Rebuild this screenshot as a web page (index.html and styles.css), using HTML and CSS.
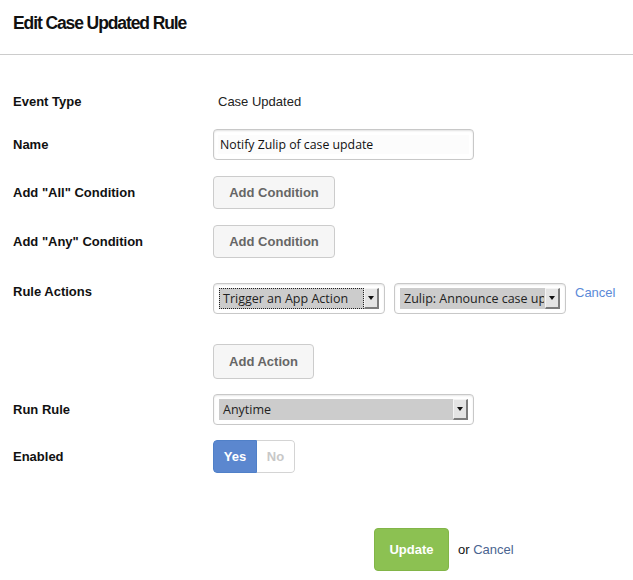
FILE: index.html
```html
<!DOCTYPE html>
<html>
<head>
<meta charset="utf-8">
<link rel="stylesheet" href="styles.css">
</head>
<body>
<div class="page">
  <header class="header">
    <h1 class="title">Edit Case Updated Rule</h1>
  </header>
  <form class="form">
    <div class="row row-event">
      <label class="label">Event Type</label>
      <div class="value static">Case Updated</div>
    </div>
    <div class="row row-name">
      <label class="label">Name</label>
      <div class="value">
        <div class="input"><span class="input-inner">Notify Zulip of case update</span></div>
      </div>
    </div>
    <div class="row row-all">
      <label class="label">Add "All" Condition</label>
      <div class="value"><button type="button" class="btn btn-cond">Add Condition</button></div>
    </div>
    <div class="row row-any">
      <label class="label">Add "Any" Condition</label>
      <div class="value"><button type="button" class="btn btn-cond">Add Condition</button></div>
    </div>
    <div class="row row-actions">
      <label class="label label-top">Rule Actions</label>
      <div class="value value-col">
        <div class="action-line">
          <div class="select select-action">
            <div class="select-face"><span class="select-text focused">Trigger an App Action</span><span class="arrow"></span></div>
          </div>
          <div class="select select-action">
            <div class="select-face"><span class="select-text">Zulip: Announce case update</span><span class="arrow"></span></div>
          </div>
          <a class="link-cancel">Cancel</a>
        </div>
        <button type="button" class="btn btn-action">Add Action</button>
      </div>
    </div>
    <div class="row row-run">
      <label class="label">Run Rule</label>
      <div class="value">
        <div class="select select-wide">
          <div class="select-face"><span class="select-text">Anytime</span><span class="arrow"></span></div>
        </div>
      </div>
    </div>
    <div class="row row-enabled">
      <label class="label">Enabled</label>
      <div class="value">
        <div class="toggle"><span class="toggle-yes">Yes</span><span class="toggle-no">No</span></div>
      </div>
    </div>
    <div class="footer">
      <button type="button" class="btn-update">Update</button>
      <span class="or">or <a class="link-footer">Cancel</a></span>
    </div>
  </form>
</div>
</body>
</html>
```

FILE: styles.css
```css
* { box-sizing: border-box; }
html, body { margin: 0; padding: 0; background: #fff; }
body { font-family: "Liberation Sans", Arial, sans-serif; font-size: 13px; color: #222; }

.page { width: 633px; }

.header {
  height: 55px;
  border-bottom: 1px solid #cccccc;
  padding: 13px 0 0 13px;
}
.title {
  margin: 0;
  font-family: "Liberation Sans", Arial, sans-serif;
  font-weight: bold;
  font-size: 17.5px;
  letter-spacing: -1.1px;
  line-height: 20px;
  color: #111;
}

.form { padding: 0 0 0 13px; }

.row { display: flex; align-items: center; }
.label {
  width: 200px;
  flex: none;
  font-weight: bold;
  font-size: 13px;
  line-height: 16px;
  color: #111;
}
.label-top { align-self: flex-start; padding-top: 1px; }
.value { flex: 1; display: flex; align-items: center; }
.static { padding-left: 5px; line-height: 16px; color: #222; }

.row-event { margin-top: 37px; height: 20px; }
.row-name { margin-top: 17px; }
.row-all { margin-top: 16px; }
.row-any { margin-top: 16px; }
.row-actions { margin-top: 25px; align-items: flex-start; }
.row-run { margin-top: 15px; }
.row-enabled { margin-top: 15px; }

.input {
  width: 261px;
  height: 31px;
  border: 1px solid #c8c8c8;
  border-radius: 4px;
  box-shadow: inset 0 1px 2px rgba(0,0,0,0.12);
  padding: 5px 4px;
  background: #fff;
}
.input-inner {
  display: block;
  height: 19px;
  padding-left: 2px;
  font-family: "Open Sans", "Noto Sans", sans-serif;
  font-size: 12.3px;
  line-height: 19px;
  color: #111;
  background: #fcfcfc;
}

.btn {
  font-family: "Liberation Sans", Arial, sans-serif;
  font-weight: bold;
  font-size: 13px;
  color: #666;
  background: #f6f6f6;
  border: 1px solid #cccccc;
  border-radius: 4px;
  padding: 0;
  cursor: pointer;
}
.btn-cond { width: 122px; height: 33px; }
.btn-action { width: 101px; height: 35px; margin-top: 30px; }

.value-col { flex-direction: column; align-items: flex-start; }
.action-line { display: flex; align-items: flex-start; gap: 9px; }

.select {
  border: 1px solid #c8c8c8;
  border-radius: 4px;
  box-shadow: inset 0 1px 2px rgba(0,0,0,0.1);
  padding: 4px 5px;
  background: #fff;
}
.select-action { width: 172px; height: 31px; }
.select-wide { width: 261px; height: 31px; }
.select-face {
  display: flex;
  height: 21px;
  background: #cccccc;
}
.select-text {
  flex: 1;
  min-width: 0;
  overflow: hidden;
  white-space: nowrap;
  padding-left: 3px;
  font-family: "Open Sans", "Noto Sans", sans-serif;
  font-size: 12.5px;
  line-height: 19px;
  color: #222;
  border: 1px solid transparent;
}
.select-text.focused { border: 1px dotted #222; }
.arrow {
  flex: none;
  width: 15px;
  height: 21px;
  position: relative;
  background: #e4e4e4;
  border-top: 1px solid #f4f4f4;
  border-left: 1px solid #f4f4f4;
  border-right: 2px solid #7c7c7c;
  border-bottom: 2px solid #7c7c7c;
}
.arrow::after {
  content: "";
  position: absolute;
  left: 3px;
  top: 7px;
  border-left: 3px solid transparent;
  border-right: 3px solid transparent;
  border-top: 4px solid #111;
}

.link-cancel {
  margin-top: 2px;
  line-height: 15px;
  color: #5b8ad8;
  font-size: 13px;
  cursor: pointer;
}

.toggle {
  display: flex;
  height: 33px;
  border-radius: 4px;
  overflow: hidden;
  font-weight: bold;
  font-size: 13px;
}
.toggle-yes {
  width: 44px;
  background: #5b87cf;
  color: #fff;
  display: flex; align-items: center; justify-content: center;
  border: 1px solid #5080c8;
  border-radius: 4px 0 0 4px;
}
.toggle-no {
  width: 38px;
  background: #fff;
  color: #c8c8c8;
  display: flex; align-items: center; justify-content: center;
  border: 1px solid #d4d4d4;
  border-left: none;
  border-radius: 0 4px 4px 0;
}

.footer {
  display: flex;
  align-items: center;
  margin-top: 55px;
  padding-left: 361px;
}
.btn-update {
  width: 75px;
  height: 43px;
  background: #8cc152;
  border: 1px solid #82b548;
  border-radius: 4px;
  color: #fff;
  font-family: "Liberation Sans", Arial, sans-serif;
  font-weight: bold;
  font-size: 13px;
  padding: 0;
}
.or { margin-left: 9px; color: #111; }
.link-footer { color: #4a6490; cursor: pointer; }
```
